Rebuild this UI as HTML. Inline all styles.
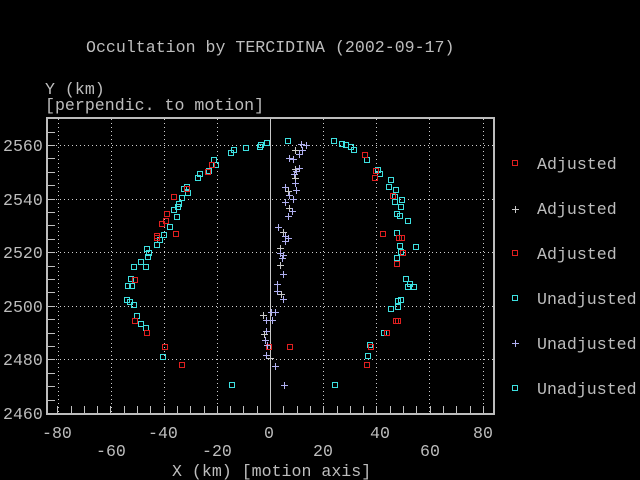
<!DOCTYPE html>
<html><head><meta charset="utf-8"><style>
html,body{margin:0;padding:0;background:#000;width:640px;height:480px;overflow:hidden}
svg{display:block}
text{font-family:"Liberation Mono","DejaVu Sans Mono",monospace;font-size:16.6px;fill:#bdbdbd}
</style></head><body>
<svg id="s" width="640" height="480" xmlns="http://www.w3.org/2000/svg">
<rect width="640" height="480" fill="#000"/>
<text x="86" y="52">Occultation by TERCIDINA (2002-09-17)</text>
<text x="45" y="94">Y (km)</text>
<text x="45" y="110">[perpendic. to motion]</text>
<g id="grid" stroke="#cfcfcf" stroke-width="1" stroke-dasharray="1,3"></g>
<g id="ticks" stroke="#bfbfbf" stroke-width="1"></g>
<line x1="270.5" y1="118" x2="270.5" y2="413" stroke="#c8c8c8" stroke-width="1"/>
<rect x="47" y="118" width="447" height="296" fill="none" stroke="#bdbdbd" stroke-width="2"/>
<g id="yl"></g>
<text x="42" y="438">-80</text><text x="148" y="438">-40</text><text x="264" y="438">0</text><text x="370" y="438">40</text><text x="473" y="438">80</text>
<text x="96" y="456">-60</text><text x="202" y="456">-20</text><text x="313" y="456">20</text><text x="420" y="456">60</text>
<text x="172" y="476">X (km) [motion axis]</text>
<g id="pts"></g>
<g id="leg"></g>
<text x="537" y="169">Adjusted</text>
<text x="537" y="214">Adjusted</text>
<text x="537" y="259">Adjusted</text>
<text x="537" y="304">Unadjusted</text>
<text x="537" y="349">Unadjusted</text>
<text x="537" y="394">Unadjusted</text>
</svg>
<script>
var NS="http://www.w3.org/2000/svg";
function el(p,t,a){var e=document.createElementNS(NS,t);for(var k in a)e.setAttribute(k,a[k]);document.getElementById(p).appendChild(e);return e;}
var xs=[58,111,164,217,323,376,429,483];
xs.forEach(function(x){el("grid","line",{x1:x+.5,y1:119,x2:x+.5,y2:413});});
[145,199,252,306,359].forEach(function(y){el("grid","line",{x1:48,y1:y+.5,x2:493,y2:y+.5});});
for(var i=-80;i<=85;i+=5){var x=Math.round(270+i*2.66)+.5;if(x>48&&x<493)el("ticks","line",{x1:x,y1:406,x2:x,y2:413});}
for(var v=2460;v<=2570;v+=5){var y=Math.round(413-(v-2460)*2.68)+.5;if(y>119&&y<413)el("ticks","line",{x1:48,y1:y,x2:55,y2:y});}
[2560,2540,2520,2500,2480,2460].forEach(function(v){var y=Math.round(413-(v-2460)*2.68);var t=el("yl","text",{x:3,y:y+6});t.textContent=v;});
function sq(g,x,y,c){el(g,"rect",{x:x-2.5,y:y-2.5,width:5,height:5,fill:"none",stroke:c,"stroke-width":1});}
function cr(g,x,y,c){el(g,"path",{d:"M"+(x-3)+" "+(y+.5)+"h7M"+(x+.5)+" "+(y-3)+"v7",stroke:c,"stroke-width":1,fill:"none"});}
var cy="#3ee0e0",rd="#e02020",pu="#b0b0f0",gy="#c8c8c8";
var C=[[267,143],[261,145],[260,147],[246,148],[234,150],[231,153],[214,160],[216,165],[209,171],[200,174],[198,178],[187,187],[184,189],[188,193],[182,198],[179,204],[178,207],[174,210],[177,217],[170,227],[164,235],[160,240],[157,245],[147,249],[149,253],[148,257],[141,262],[134,267],[146,267],[131,279],[128,286],[132,286],[127,300],[130,302],[134,305],[137,316],[141,324],[146,328],[163,357],[232,385],
[288,141],[334,141],[342,144],[346,145],[351,147],[354,150],[367,160],[378,170],[380,174],[391,180],[389,187],[396,190],[395,197],[402,200],[395,202],[401,207],[397,214],[400,216],[408,221],[397,233],[400,246],[401,252],[397,258],[416,247],[406,279],[410,284],[408,287],[414,287],[401,300],[398,301],[398,307],[391,309],[384,333],[370,345],[368,356],[335,385]];
var R=[[212,165],[208,172],[187,189],[174,197],[167,214],[166,221],[162,224],[157,236],[157,238],[176,234],[135,280],[135,321],[147,333],[165,347],[182,365],[269,347],[290,347],
[365,155],[376,171],[375,178],[393,196],[383,234],[399,238],[402,238],[403,253],[397,264],[396,321],[398,321],[387,333],[371,347],[367,365]];
var P=[[301,144],[306,145],[302,150],[295,150],[293,159],[299,154],[289,158],[295,169],[299,168],[296,171],[294,174],[295,178],[295,183],[296,190],[285,187],[288,191],[289,195],[293,199],[285,202],[289,208],[292,211],[288,216],[278,227],[283,232],[285,236],[288,238],[285,241],[280,248],[280,253],[283,255],[282,258],[280,265],[283,274],[277,284],[277,291],[281,294],[283,299],[271,312],[275,312],[263,315],[266,320],[272,320],[266,331],[264,334],[265,340],[267,345],[266,355],[270,358],[275,366],[284,385]];
C.forEach(function(p){sq("pts",p[0],p[1],cy);});
R.forEach(function(p){sq("pts",p[0],p[1],rd);});
P.forEach(function(p,i){cr("pts",p[0],p[1],i%4==3?gy:pu);});
sq("leg",515,163,rd);cr("leg",515,209,gy);sq("leg",515,253,rd);sq("leg",515,298,cy);cr("leg",515,343,pu);sq("leg",515,388,cy);
</script>
</body></html>
